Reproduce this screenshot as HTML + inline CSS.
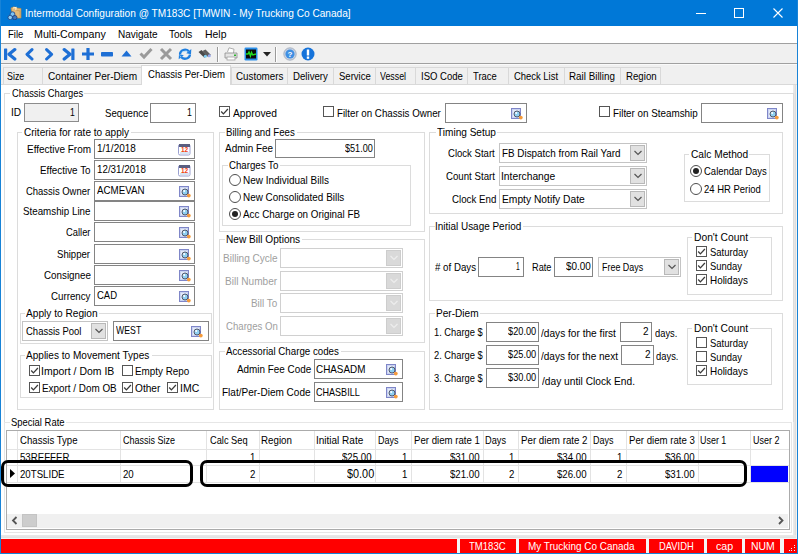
<!DOCTYPE html><html><head><meta charset="utf-8"><style>*{margin:0;padding:0}body{width:798px;height:554px;overflow:hidden;position:relative;background:#F0F0F0}.a{position:absolute}.t{position:absolute;white-space:pre;font-family:"Liberation Sans",sans-serif;font-size:11.5px;line-height:14px;transform-origin:0 50%}</style></head><body><div class="a" style="left:0px;top:0px;width:798px;height:554px;background:#F0F0F0;"></div>
<div class="a" style="left:0px;top:0px;width:798px;height:26px;background:#0078D7;"></div>
<div class="a" style="left:0px;top:0px;width:1px;height:554px;background:#1883D7;"></div>
<div class="a" style="left:797px;top:0px;width:1px;height:554px;background:#1883D7;"></div>
<div class="a" style="left:0px;top:553px;width:798px;height:1px;background:#1883D7;"></div>
<svg class="a" style="left:7px;top:6px;" width="15" height="14" viewBox="0 0 15 14"><path d="M4 2 L7 0.8 L10 2 L14 2.5 L14 12 L6 12 Z" fill="#E2B978" stroke="#B88A48" stroke-width="0.7"/><path d="M6 2 L9 1.5 L9 4" fill="none" stroke="#FFF0D0" stroke-width="1.2"/><path d="M9 4 L13 5 L13 11" fill="none" stroke="#C99A58" stroke-width="0.8"/><circle cx="5.5" cy="8.2" r="2.4" fill="#7CC2F2" stroke="#1D3F80" stroke-width="0.8"/><circle cx="3.2" cy="11.5" r="2.2" fill="#8ACDF5" stroke="#1D3F80" stroke-width="0.8"/><circle cx="7.8" cy="11.6" r="2.2" fill="#3E78C0" stroke="#1D3F80" stroke-width="0.8"/></svg>
<div class="a" style="left:696px;top:13px;width:10px;height:1px;background:#fff;"></div>
<div class="a" style="left:734px;top:8px;width:10px;height:10px;box-sizing:border-box;border:1px solid #fff;"></div>
<svg class="a" style="left:773px;top:8px;" width="10" height="10" viewBox="0 0 10 10"><path d="M0.5 0.5 L9.5 9.5 M9.5 0.5 L0.5 9.5" stroke="#fff" stroke-width="1.1"/></svg>
<div class="a" style="left:1px;top:26px;width:796px;height:17px;background:#fff;"></div>
<div class="a" style="left:1px;top:43px;width:796px;height:1px;background:#A0A0A0;"></div>
<div class="a" style="left:1px;top:44px;width:796px;height:19px;background:#F0F0F0;"></div>
<div class="a" style="left:1px;top:63px;width:796px;height:1px;background:#A0A0A0;"></div>
<div class="a" style="left:1px;top:64px;width:796px;height:1px;background:#FAFAFA;"></div>
<svg class="a" style="left:3px;top:47px;" width="14" height="14" viewBox="0 0 14 14"><rect x="1" y="1.5" width="3.2" height="11.5" rx="0.6" fill="#1E6FD5"/><path d="M11.8 2.6 L6 7.3 L11.8 12" fill="none" stroke="#1E6FD5" stroke-width="3.2" stroke-linecap="round" stroke-linejoin="round"/></svg>
<svg class="a" style="left:24px;top:47px;" width="11" height="14" viewBox="0 0 11 14"><path d="M8 2.6 L3 7.3 L8 12" fill="none" stroke="#1E6FD5" stroke-width="3" stroke-linecap="round" stroke-linejoin="round"/></svg>
<svg class="a" style="left:44px;top:47px;" width="11" height="14" viewBox="0 0 11 14"><path d="M2.6 2.6 L7.6 7.3 L2.6 12" fill="none" stroke="#1E6FD5" stroke-width="3" stroke-linecap="round" stroke-linejoin="round"/></svg>
<svg class="a" style="left:62px;top:47px;" width="14" height="14" viewBox="0 0 14 14"><rect x="9.3" y="1.5" width="3.2" height="11.5" rx="0.6" fill="#1E6FD5"/><path d="M2.2 2.6 L8 7.3 L2.2 12" fill="none" stroke="#1E6FD5" stroke-width="3.2" stroke-linecap="round" stroke-linejoin="round"/></svg>
<svg class="a" style="left:81px;top:47px;" width="14" height="14" viewBox="0 0 14 14"><path d="M7 1 V13 M1 7 H13" stroke="#1E6FD5" stroke-width="3.2"/></svg>
<svg class="a" style="left:100px;top:47px;" width="14" height="14" viewBox="0 0 14 14"><rect x="1" y="5" width="12" height="4.5" rx="0.8" fill="#1E6FD5"/></svg>
<svg class="a" style="left:121px;top:50px;" width="11" height="7" viewBox="0 0 11 7"><path d="M0.5 6.5 L5.5 0.5 L10.5 6.5 Z" fill="#1E6FD5"/></svg>
<svg class="a" style="left:139px;top:47px;" width="14" height="13" viewBox="0 0 14 13"><path d="M1.5 6.5 L5 10 L12.5 2" fill="none" stroke="#9A9A9A" stroke-width="3"/></svg>
<svg class="a" style="left:159px;top:47px;" width="14" height="14" viewBox="0 0 14 14"><path d="M2 2 L12 12 M12 2 L2 12" stroke="#9A9A9A" stroke-width="3"/></svg>
<svg class="a" style="left:178px;top:47px;" width="14" height="14" viewBox="0 0 14 14"><path d="M2 7 C2.3 3, 7.5 1.2, 10.8 4.2" fill="none" stroke="#1F7FE0" stroke-width="2.3"/><path d="M13.3 2 L13 7.3 L8.2 6.2 Z" fill="#1F7FE0"/><path d="M12 7.5 C11.7 11.5, 6.5 13.2, 3.2 10.2" fill="none" stroke="#1F7FE0" stroke-width="2.3"/><path d="M0.7 12.3 L1 7 L5.8 8.2 Z" fill="#1F7FE0"/><path d="M4 5 L9 4" stroke="#A8DBFA" stroke-width="0.8"/><path d="M3 10 L1.8 8.5" stroke="#A8DBFA" stroke-width="0.8"/></svg>
<svg class="a" style="left:198px;top:49px;" width="13" height="10" viewBox="0 0 13 10"><path d="M0.5 3 L3.5 1 L8.8 6.2 L6.3 8.8 Z" fill="#4A4A4A"/><path d="M4.5 2 L7.5 0.5 L12.8 5.8 L10.2 8.2 Z" fill="#5E5E5E"/><circle cx="7.3" cy="7.3" r="1.5" fill="#7FD0F5"/><circle cx="11.3" cy="6.8" r="1.5" fill="#9AA8F0"/></svg>
<div class="a" style="left:217px;top:47px;width:1px;height:15px;background:#9A9A9A;"></div>
<div class="a" style="left:218px;top:47px;width:1px;height:15px;background:#FFFFFF;"></div>
<svg class="a" style="left:224px;top:47px;" width="14" height="14" viewBox="0 0 14 14"><path d="M3.5 5 L5 0.8 L10 2.2 L9.5 6" fill="#fff" stroke="#9A9A9A" stroke-width="0.8"/><path d="M1 6 L13 6 L13 11 L1 11 Z" fill="#E4E4E4" stroke="#8A8A8A" stroke-width="0.8"/><rect x="3" y="10" width="8" height="3" fill="#fff" stroke="#A0A0A0" stroke-width="0.8"/><rect x="10" y="7.5" width="2" height="1.5" fill="#2DB52D"/></svg>
<svg class="a" style="left:244px;top:47px;" width="14" height="14" viewBox="0 0 14 14"><rect x="0.5" y="0.5" width="13" height="13" rx="1.2" fill="#2B8FEA"/><rect x="2" y="2.5" width="10" height="9" fill="#0A0A0A"/><path d="M2 7 L4 7 L5 5 L6.5 9 L7.5 5.5 L8.8 8 L12 7" fill="none" stroke="#22DD22" stroke-width="1.4"/></svg>
<svg class="a" style="left:263px;top:52px;" width="8" height="5" viewBox="0 0 8 5"><path d="M0 0 L8 0 L4 4.5 Z" fill="#222"/></svg>
<div class="a" style="left:275px;top:47px;width:1px;height:15px;background:#9A9A9A;"></div>
<div class="a" style="left:276px;top:47px;width:1px;height:15px;background:#FFFFFF;"></div>
<svg class="a" style="left:283px;top:47px;" width="14" height="14" viewBox="0 0 14 14"><circle cx="7" cy="7" r="6.2" fill="#C9D3E3" stroke="#9AA6B8" stroke-width="0.8"/><circle cx="7" cy="7" r="4.6" fill="#3F8FE3"/><text x="7" y="10" font-family="Liberation Sans" font-size="8" font-weight="bold" fill="#fff" text-anchor="middle">?</text></svg>
<svg class="a" style="left:301px;top:47px;" width="14" height="14" viewBox="0 0 14 14"><circle cx="7" cy="7" r="6.5" fill="#1673DA"/><rect x="5.8" y="2.5" width="2.4" height="6" fill="#fff"/><rect x="5.8" y="9.5" width="2.4" height="2.3" fill="#fff"/></svg>
<div class="a" style="left:1px;top:84px;width:796px;height:455px;background:#fff;"></div>
<div class="a" style="left:793px;top:84px;width:1px;height:454px;background:#EAEAEA;"></div>
<div class="a" style="left:794px;top:84px;width:1px;height:454px;background:#E6E6E6;"></div>
<div class="a" style="left:795px;top:84px;width:1px;height:454px;background:#DDDDDD;"></div>
<div class="a" style="left:796px;top:84px;width:1px;height:455px;background:#F7F3EE;"></div>
<div class="a" style="left:1px;top:535px;width:795px;height:1px;background:#E8E8E8;"></div>
<div class="a" style="left:1px;top:536px;width:795px;height:1px;background:#E6E6E6;"></div>
<div class="a" style="left:1px;top:537px;width:795px;height:1px;background:#E2E2E2;"></div>
<div class="a" style="left:3px;top:67px;width:40px;height:18px;background:#F0F0F0;box-sizing:border-box;border:1px solid #D9D9D9;"></div>
<div class="a" style="left:42px;top:67px;width:100px;height:18px;background:#F0F0F0;box-sizing:border-box;border:1px solid #D9D9D9;"></div>
<div class="a" style="left:231px;top:67px;width:57px;height:18px;background:#F0F0F0;box-sizing:border-box;border:1px solid #D9D9D9;"></div>
<div class="a" style="left:287px;top:67px;width:47px;height:18px;background:#F0F0F0;box-sizing:border-box;border:1px solid #D9D9D9;"></div>
<div class="a" style="left:333px;top:67px;width:43px;height:18px;background:#F0F0F0;box-sizing:border-box;border:1px solid #D9D9D9;"></div>
<div class="a" style="left:375px;top:67px;width:41px;height:18px;background:#F0F0F0;box-sizing:border-box;border:1px solid #D9D9D9;"></div>
<div class="a" style="left:415px;top:67px;width:53px;height:18px;background:#F0F0F0;box-sizing:border-box;border:1px solid #D9D9D9;"></div>
<div class="a" style="left:467px;top:67px;width:42px;height:18px;background:#F0F0F0;box-sizing:border-box;border:1px solid #D9D9D9;"></div>
<div class="a" style="left:508px;top:67px;width:57px;height:18px;background:#F0F0F0;box-sizing:border-box;border:1px solid #D9D9D9;"></div>
<div class="a" style="left:564px;top:67px;width:57px;height:18px;background:#F0F0F0;box-sizing:border-box;border:1px solid #D9D9D9;"></div>
<div class="a" style="left:620px;top:67px;width:41px;height:18px;background:#F0F0F0;box-sizing:border-box;border:1px solid #D9D9D9;"></div>
<div class="a" style="left:1px;top:84px;width:796px;height:1px;background:#D9D9D9;"></div>
<div class="a" style="left:141px;top:65px;width:90px;height:20px;background:#fff;box-sizing:border-box;border:1px solid #D9D9D9;border-bottom:none;"></div>
<div class="a" style="left:4px;top:93px;width:6px;height:1px;background:#DCDCDC;"></div>
<div class="a" style="left:84px;top:93px;width:710px;height:1px;background:#DCDCDC;"></div>
<div class="a" style="left:4px;top:93px;width:1px;height:329px;background:#DCDCDC;"></div>
<div class="a" style="left:793px;top:93px;width:1px;height:329px;background:#DCDCDC;"></div>
<div class="a" style="left:24px;top:103px;width:55px;height:19px;background:#F0F0F0;box-sizing:border-box;border:1px solid #8C8C8C;"></div>
<div class="a" style="left:150px;top:103px;width:46px;height:20px;background:#fff;box-sizing:border-box;border:1px solid #848484;"></div>
<svg class="a" style="left:219px;top:106px;" width="12" height="12" viewBox="0 0 12 12"><rect x="0.5" y="0.5" width="10" height="10" fill="#fff" stroke="#555"/><path d="M2.2 5.5 L4.4 7.9 L8.9 3" fill="none" stroke="#3A3A3A" stroke-width="1.3"/></svg>
<svg class="a" style="left:323px;top:106px;" width="12" height="12" viewBox="0 0 12 12"><rect x="0.5" y="0.5" width="10" height="10" fill="#fff" stroke="#555"/></svg>
<div class="a" style="left:445px;top:103px;width:82px;height:20px;background:#fff;box-sizing:border-box;border:1px solid #848484;"></div>
<svg class="a" style="left:511px;top:108px;" width="13" height="12" viewBox="0 0 13 12"><rect x="0.5" y="0.5" width="9" height="10" fill="#C9D3F2" stroke="#7F86C8"/><rect x="2" y="2" width="6" height="7" fill="#E4EAFA"/><circle cx="6" cy="6" r="3" fill="#8FD0F2" stroke="#4A4A5A" stroke-width="0.9"/><circle cx="5.2" cy="5" r="1" fill="#fff"/><circle cx="9.8" cy="9.6" r="1.9" fill="#F59A3A"/></svg>
<svg class="a" style="left:599px;top:106px;" width="12" height="12" viewBox="0 0 12 12"><rect x="0.5" y="0.5" width="10" height="10" fill="#fff" stroke="#555"/></svg>
<div class="a" style="left:701px;top:103px;width:82px;height:20px;background:#fff;box-sizing:border-box;border:1px solid #848484;"></div>
<svg class="a" style="left:767px;top:108px;" width="13" height="12" viewBox="0 0 13 12"><rect x="0.5" y="0.5" width="9" height="10" fill="#C9D3F2" stroke="#7F86C8"/><rect x="2" y="2" width="6" height="7" fill="#E4EAFA"/><circle cx="6" cy="6" r="3" fill="#8FD0F2" stroke="#4A4A5A" stroke-width="0.9"/><circle cx="5.2" cy="5" r="1" fill="#fff"/><circle cx="9.8" cy="9.6" r="1.9" fill="#F59A3A"/></svg>
<div class="a" style="left:17px;top:132px;width:5px;height:1px;background:#DCDCDC;"></div>
<div class="a" style="left:131px;top:132px;width:83px;height:1px;background:#DCDCDC;"></div>
<div class="a" style="left:17px;top:132px;width:1px;height:278px;background:#DCDCDC;"></div>
<div class="a" style="left:213px;top:132px;width:1px;height:278px;background:#DCDCDC;"></div>
<div class="a" style="left:17px;top:409px;width:197px;height:1px;background:#DCDCDC;"></div>
<div class="a" style="left:94px;top:139px;width:101px;height:20px;background:#fff;box-sizing:border-box;border:1px solid #848484;"></div>
<svg class="a" style="left:178px;top:143px;" width="13" height="13" viewBox="0 0 13 13"><rect x="0.5" y="1.5" width="11.5" height="10.5" rx="1.5" fill="#fff" stroke="#9AA0D0"/><rect x="1" y="1" width="11" height="3" fill="#5A5E80"/><rect x="2" y="9" width="9" height="2" fill="#D6E4F4"/><text x="6.5" y="9" font-family="Liberation Sans" font-size="6.5" font-weight="bold" fill="#F0400F" text-anchor="middle">12</text></svg>
<div class="a" style="left:94px;top:160px;width:101px;height:20px;background:#fff;box-sizing:border-box;border:1px solid #848484;"></div>
<svg class="a" style="left:178px;top:164px;" width="13" height="13" viewBox="0 0 13 13"><rect x="0.5" y="1.5" width="11.5" height="10.5" rx="1.5" fill="#fff" stroke="#9AA0D0"/><rect x="1" y="1" width="11" height="3" fill="#5A5E80"/><rect x="2" y="9" width="9" height="2" fill="#D6E4F4"/><text x="6.5" y="9" font-family="Liberation Sans" font-size="6.5" font-weight="bold" fill="#F0400F" text-anchor="middle">12</text></svg>
<div class="a" style="left:94px;top:181px;width:101px;height:20px;background:#fff;box-sizing:border-box;border:1px solid #848484;"></div>
<svg class="a" style="left:179px;top:186px;" width="13" height="12" viewBox="0 0 13 12"><rect x="0.5" y="0.5" width="9" height="10" fill="#C9D3F2" stroke="#7F86C8"/><rect x="2" y="2" width="6" height="7" fill="#E4EAFA"/><circle cx="6" cy="6" r="3" fill="#8FD0F2" stroke="#4A4A5A" stroke-width="0.9"/><circle cx="5.2" cy="5" r="1" fill="#fff"/><circle cx="9.8" cy="9.6" r="1.9" fill="#F59A3A"/></svg>
<div class="a" style="left:94px;top:201px;width:101px;height:20px;background:#fff;box-sizing:border-box;border:1px solid #848484;"></div>
<svg class="a" style="left:179px;top:206px;" width="13" height="12" viewBox="0 0 13 12"><rect x="0.5" y="0.5" width="9" height="10" fill="#C9D3F2" stroke="#7F86C8"/><rect x="2" y="2" width="6" height="7" fill="#E4EAFA"/><circle cx="6" cy="6" r="3" fill="#8FD0F2" stroke="#4A4A5A" stroke-width="0.9"/><circle cx="5.2" cy="5" r="1" fill="#fff"/><circle cx="9.8" cy="9.6" r="1.9" fill="#F59A3A"/></svg>
<div class="a" style="left:94px;top:222px;width:101px;height:20px;background:#fff;box-sizing:border-box;border:1px solid #848484;"></div>
<svg class="a" style="left:179px;top:227px;" width="13" height="12" viewBox="0 0 13 12"><rect x="0.5" y="0.5" width="9" height="10" fill="#C9D3F2" stroke="#7F86C8"/><rect x="2" y="2" width="6" height="7" fill="#E4EAFA"/><circle cx="6" cy="6" r="3" fill="#8FD0F2" stroke="#4A4A5A" stroke-width="0.9"/><circle cx="5.2" cy="5" r="1" fill="#fff"/><circle cx="9.8" cy="9.6" r="1.9" fill="#F59A3A"/></svg>
<div class="a" style="left:94px;top:244px;width:101px;height:20px;background:#fff;box-sizing:border-box;border:1px solid #848484;"></div>
<svg class="a" style="left:179px;top:249px;" width="13" height="12" viewBox="0 0 13 12"><rect x="0.5" y="0.5" width="9" height="10" fill="#C9D3F2" stroke="#7F86C8"/><rect x="2" y="2" width="6" height="7" fill="#E4EAFA"/><circle cx="6" cy="6" r="3" fill="#8FD0F2" stroke="#4A4A5A" stroke-width="0.9"/><circle cx="5.2" cy="5" r="1" fill="#fff"/><circle cx="9.8" cy="9.6" r="1.9" fill="#F59A3A"/></svg>
<div class="a" style="left:94px;top:265px;width:101px;height:20px;background:#fff;box-sizing:border-box;border:1px solid #848484;"></div>
<svg class="a" style="left:179px;top:270px;" width="13" height="12" viewBox="0 0 13 12"><rect x="0.5" y="0.5" width="9" height="10" fill="#C9D3F2" stroke="#7F86C8"/><rect x="2" y="2" width="6" height="7" fill="#E4EAFA"/><circle cx="6" cy="6" r="3" fill="#8FD0F2" stroke="#4A4A5A" stroke-width="0.9"/><circle cx="5.2" cy="5" r="1" fill="#fff"/><circle cx="9.8" cy="9.6" r="1.9" fill="#F59A3A"/></svg>
<div class="a" style="left:94px;top:286px;width:101px;height:20px;background:#fff;box-sizing:border-box;border:1px solid #848484;"></div>
<svg class="a" style="left:179px;top:291px;" width="13" height="12" viewBox="0 0 13 12"><rect x="0.5" y="0.5" width="9" height="10" fill="#C9D3F2" stroke="#7F86C8"/><rect x="2" y="2" width="6" height="7" fill="#E4EAFA"/><circle cx="6" cy="6" r="3" fill="#8FD0F2" stroke="#4A4A5A" stroke-width="0.9"/><circle cx="5.2" cy="5" r="1" fill="#fff"/><circle cx="9.8" cy="9.6" r="1.9" fill="#F59A3A"/></svg>
<div class="a" style="left:20px;top:313px;width:5px;height:1px;background:#DCDCDC;"></div>
<div class="a" style="left:99px;top:313px;width:113px;height:1px;background:#DCDCDC;"></div>
<div class="a" style="left:20px;top:313px;width:1px;height:31px;background:#DCDCDC;"></div>
<div class="a" style="left:211px;top:313px;width:1px;height:31px;background:#DCDCDC;"></div>
<div class="a" style="left:20px;top:343px;width:192px;height:1px;background:#DCDCDC;"></div>
<div class="a" style="left:22px;top:321px;width:86px;height:20px;background:#fff;box-sizing:border-box;border:1px solid #C4C4C4;"></div>
<div class="a" style="left:91px;top:323px;width:15px;height:16px;background:#E1E1E1;box-sizing:border-box;border:1px solid #B8B8B8;"></div>
<svg class="a" style="left:94px;top:328px;" width="10" height="6" viewBox="0 0 10 6"><path d="M1.5 1 L5 4.5 L8.5 1" fill="none" stroke="#555" stroke-width="1.2"/></svg>
<div class="a" style="left:113px;top:321px;width:96px;height:20px;background:#fff;box-sizing:border-box;border:1px solid #848484;"></div>
<svg class="a" style="left:191px;top:326px;" width="13" height="12" viewBox="0 0 13 12"><rect x="0.5" y="0.5" width="9" height="10" fill="#C9D3F2" stroke="#7F86C8"/><rect x="2" y="2" width="6" height="7" fill="#E4EAFA"/><circle cx="6" cy="6" r="3" fill="#8FD0F2" stroke="#4A4A5A" stroke-width="0.9"/><circle cx="5.2" cy="5" r="1" fill="#fff"/><circle cx="9.8" cy="9.6" r="1.9" fill="#F59A3A"/></svg>
<div class="a" style="left:20px;top:355px;width:5px;height:1px;background:#DCDCDC;"></div>
<div class="a" style="left:152px;top:355px;width:60px;height:1px;background:#DCDCDC;"></div>
<div class="a" style="left:20px;top:355px;width:1px;height:43px;background:#DCDCDC;"></div>
<div class="a" style="left:211px;top:355px;width:1px;height:43px;background:#DCDCDC;"></div>
<div class="a" style="left:20px;top:397px;width:192px;height:1px;background:#DCDCDC;"></div>
<svg class="a" style="left:29px;top:365px;" width="12" height="12" viewBox="0 0 12 12"><rect x="0.5" y="0.5" width="10" height="10" fill="#fff" stroke="#555"/><path d="M2.2 5.5 L4.4 7.9 L8.9 3" fill="none" stroke="#3A3A3A" stroke-width="1.3"/></svg>
<svg class="a" style="left:122px;top:365px;" width="12" height="12" viewBox="0 0 12 12"><rect x="0.5" y="0.5" width="10" height="10" fill="#fff" stroke="#555"/></svg>
<svg class="a" style="left:29px;top:382px;" width="12" height="12" viewBox="0 0 12 12"><rect x="0.5" y="0.5" width="10" height="10" fill="#fff" stroke="#555"/><path d="M2.2 5.5 L4.4 7.9 L8.9 3" fill="none" stroke="#3A3A3A" stroke-width="1.3"/></svg>
<svg class="a" style="left:122px;top:382px;" width="12" height="12" viewBox="0 0 12 12"><rect x="0.5" y="0.5" width="10" height="10" fill="#fff" stroke="#555"/><path d="M2.2 5.5 L4.4 7.9 L8.9 3" fill="none" stroke="#3A3A3A" stroke-width="1.3"/></svg>
<svg class="a" style="left:167px;top:382px;" width="12" height="12" viewBox="0 0 12 12"><rect x="0.5" y="0.5" width="10" height="10" fill="#fff" stroke="#555"/><path d="M2.2 5.5 L4.4 7.9 L8.9 3" fill="none" stroke="#3A3A3A" stroke-width="1.3"/></svg>
<div class="a" style="left:219px;top:132px;width:6px;height:1px;background:#DCDCDC;"></div>
<div class="a" style="left:297px;top:132px;width:128px;height:1px;background:#DCDCDC;"></div>
<div class="a" style="left:219px;top:132px;width:1px;height:100px;background:#DCDCDC;"></div>
<div class="a" style="left:424px;top:132px;width:1px;height:100px;background:#DCDCDC;"></div>
<div class="a" style="left:219px;top:231px;width:206px;height:1px;background:#DCDCDC;"></div>
<div class="a" style="left:275px;top:139px;width:100px;height:19px;background:#fff;box-sizing:border-box;border:1px solid #848484;"></div>
<div class="a" style="left:222px;top:165px;width:6px;height:1px;background:#DCDCDC;"></div>
<div class="a" style="left:280px;top:165px;width:131px;height:1px;background:#DCDCDC;"></div>
<div class="a" style="left:222px;top:165px;width:1px;height:61px;background:#DCDCDC;"></div>
<div class="a" style="left:410px;top:165px;width:1px;height:61px;background:#DCDCDC;"></div>
<div class="a" style="left:222px;top:225px;width:189px;height:1px;background:#DCDCDC;"></div>
<svg class="a" style="left:229px;top:174px;" width="12" height="12" viewBox="0 0 12 12"><circle cx="6" cy="6" r="5.5" fill="#fff" stroke="#4D4D4D"/></svg>
<svg class="a" style="left:229px;top:191px;" width="12" height="12" viewBox="0 0 12 12"><circle cx="6" cy="6" r="5.5" fill="#fff" stroke="#4D4D4D"/></svg>
<svg class="a" style="left:229px;top:208px;" width="12" height="12" viewBox="0 0 12 12"><circle cx="6" cy="6" r="5.5" fill="#fff" stroke="#4D4D4D"/><circle cx="6" cy="6" r="3" fill="#222"/></svg>
<div class="a" style="left:219px;top:239px;width:6px;height:1px;background:#DCDCDC;"></div>
<div class="a" style="left:302px;top:239px;width:123px;height:1px;background:#DCDCDC;"></div>
<div class="a" style="left:219px;top:239px;width:1px;height:104px;background:#DCDCDC;"></div>
<div class="a" style="left:424px;top:239px;width:1px;height:104px;background:#DCDCDC;"></div>
<div class="a" style="left:219px;top:342px;width:206px;height:1px;background:#DCDCDC;"></div>
<div class="a" style="left:280px;top:248px;width:123px;height:20px;background:#fff;box-sizing:border-box;border:1px solid #D0D0D0;"></div>
<div class="a" style="left:386px;top:250px;width:15px;height:16px;background:#D9D9D9;box-sizing:border-box;border:1px solid #CDCDCD;"></div>
<svg class="a" style="left:389px;top:255px;" width="10" height="6" viewBox="0 0 10 6"><path d="M1.5 1 L5 4.5 L8.5 1" fill="none" stroke="#EDEDED" stroke-width="1.2"/></svg>
<div class="a" style="left:280px;top:271px;width:123px;height:20px;background:#fff;box-sizing:border-box;border:1px solid #D0D0D0;"></div>
<div class="a" style="left:386px;top:273px;width:15px;height:16px;background:#D9D9D9;box-sizing:border-box;border:1px solid #CDCDCD;"></div>
<svg class="a" style="left:389px;top:278px;" width="10" height="6" viewBox="0 0 10 6"><path d="M1.5 1 L5 4.5 L8.5 1" fill="none" stroke="#EDEDED" stroke-width="1.2"/></svg>
<div class="a" style="left:280px;top:293px;width:123px;height:20px;background:#fff;box-sizing:border-box;border:1px solid #D0D0D0;"></div>
<div class="a" style="left:386px;top:295px;width:15px;height:16px;background:#D9D9D9;box-sizing:border-box;border:1px solid #CDCDCD;"></div>
<svg class="a" style="left:389px;top:300px;" width="10" height="6" viewBox="0 0 10 6"><path d="M1.5 1 L5 4.5 L8.5 1" fill="none" stroke="#EDEDED" stroke-width="1.2"/></svg>
<div class="a" style="left:280px;top:316px;width:123px;height:20px;background:#fff;box-sizing:border-box;border:1px solid #D0D0D0;"></div>
<div class="a" style="left:386px;top:318px;width:15px;height:16px;background:#D9D9D9;box-sizing:border-box;border:1px solid #CDCDCD;"></div>
<svg class="a" style="left:389px;top:323px;" width="10" height="6" viewBox="0 0 10 6"><path d="M1.5 1 L5 4.5 L8.5 1" fill="none" stroke="#EDEDED" stroke-width="1.2"/></svg>
<div class="a" style="left:219px;top:351px;width:6px;height:1px;background:#DCDCDC;"></div>
<div class="a" style="left:341px;top:351px;width:84px;height:1px;background:#DCDCDC;"></div>
<div class="a" style="left:219px;top:351px;width:1px;height:59px;background:#DCDCDC;"></div>
<div class="a" style="left:424px;top:351px;width:1px;height:59px;background:#DCDCDC;"></div>
<div class="a" style="left:219px;top:409px;width:206px;height:1px;background:#DCDCDC;"></div>
<div class="a" style="left:314px;top:359px;width:89px;height:20px;background:#fff;box-sizing:border-box;border:1px solid #848484;"></div>
<svg class="a" style="left:386px;top:364px;" width="13" height="12" viewBox="0 0 13 12"><rect x="0.5" y="0.5" width="9" height="10" fill="#C9D3F2" stroke="#7F86C8"/><rect x="2" y="2" width="6" height="7" fill="#E4EAFA"/><circle cx="6" cy="6" r="3" fill="#8FD0F2" stroke="#4A4A5A" stroke-width="0.9"/><circle cx="5.2" cy="5" r="1" fill="#fff"/><circle cx="9.8" cy="9.6" r="1.9" fill="#F59A3A"/></svg>
<div class="a" style="left:314px;top:382px;width:89px;height:20px;background:#fff;box-sizing:border-box;border:1px solid #848484;"></div>
<svg class="a" style="left:386px;top:387px;" width="13" height="12" viewBox="0 0 13 12"><rect x="0.5" y="0.5" width="9" height="10" fill="#C9D3F2" stroke="#7F86C8"/><rect x="2" y="2" width="6" height="7" fill="#E4EAFA"/><circle cx="6" cy="6" r="3" fill="#8FD0F2" stroke="#4A4A5A" stroke-width="0.9"/><circle cx="5.2" cy="5" r="1" fill="#fff"/><circle cx="9.8" cy="9.6" r="1.9" fill="#F59A3A"/></svg>
<div class="a" style="left:429px;top:132px;width:7px;height:1px;background:#DCDCDC;"></div>
<div class="a" style="left:497px;top:132px;width:286px;height:1px;background:#DCDCDC;"></div>
<div class="a" style="left:429px;top:132px;width:1px;height:82px;background:#DCDCDC;"></div>
<div class="a" style="left:782px;top:132px;width:1px;height:82px;background:#DCDCDC;"></div>
<div class="a" style="left:429px;top:213px;width:354px;height:1px;background:#DCDCDC;"></div>
<div class="a" style="left:499px;top:143px;width:148px;height:20px;background:#fff;box-sizing:border-box;border:1px solid #C4C4C4;"></div>
<div class="a" style="left:630px;top:145px;width:15px;height:16px;background:#E1E1E1;box-sizing:border-box;border:1px solid #B8B8B8;"></div>
<svg class="a" style="left:633px;top:150px;" width="10" height="6" viewBox="0 0 10 6"><path d="M1.5 1 L5 4.5 L8.5 1" fill="none" stroke="#555" stroke-width="1.2"/></svg>
<div class="a" style="left:499px;top:166px;width:148px;height:20px;background:#fff;box-sizing:border-box;border:1px solid #C4C4C4;"></div>
<div class="a" style="left:630px;top:168px;width:15px;height:16px;background:#E1E1E1;box-sizing:border-box;border:1px solid #B8B8B8;"></div>
<svg class="a" style="left:633px;top:173px;" width="10" height="6" viewBox="0 0 10 6"><path d="M1.5 1 L5 4.5 L8.5 1" fill="none" stroke="#555" stroke-width="1.2"/></svg>
<div class="a" style="left:499px;top:189px;width:148px;height:20px;background:#fff;box-sizing:border-box;border:1px solid #C4C4C4;"></div>
<div class="a" style="left:630px;top:191px;width:15px;height:16px;background:#E1E1E1;box-sizing:border-box;border:1px solid #B8B8B8;"></div>
<svg class="a" style="left:633px;top:196px;" width="10" height="6" viewBox="0 0 10 6"><path d="M1.5 1 L5 4.5 L8.5 1" fill="none" stroke="#555" stroke-width="1.2"/></svg>
<div class="a" style="left:684px;top:154px;width:5px;height:1px;background:#DCDCDC;"></div>
<div class="a" style="left:749px;top:154px;width:21px;height:1px;background:#DCDCDC;"></div>
<div class="a" style="left:684px;top:154px;width:1px;height:48px;background:#DCDCDC;"></div>
<div class="a" style="left:769px;top:154px;width:1px;height:48px;background:#DCDCDC;"></div>
<div class="a" style="left:684px;top:201px;width:86px;height:1px;background:#DCDCDC;"></div>
<svg class="a" style="left:690px;top:165px;" width="12" height="12" viewBox="0 0 12 12"><circle cx="6" cy="6" r="5.5" fill="#fff" stroke="#4D4D4D"/><circle cx="6" cy="6" r="3" fill="#222"/></svg>
<svg class="a" style="left:690px;top:183px;" width="12" height="12" viewBox="0 0 12 12"><circle cx="6" cy="6" r="5.5" fill="#fff" stroke="#4D4D4D"/></svg>
<div class="a" style="left:429px;top:226px;width:6px;height:1px;background:#DCDCDC;"></div>
<div class="a" style="left:523px;top:226px;width:260px;height:1px;background:#DCDCDC;"></div>
<div class="a" style="left:429px;top:226px;width:1px;height:75px;background:#DCDCDC;"></div>
<div class="a" style="left:782px;top:226px;width:1px;height:75px;background:#DCDCDC;"></div>
<div class="a" style="left:429px;top:300px;width:354px;height:1px;background:#DCDCDC;"></div>
<div class="a" style="left:478px;top:257px;width:46px;height:20px;background:#fff;box-sizing:border-box;border:1px solid #848484;"></div>
<div class="a" style="left:554px;top:257px;width:39px;height:20px;background:#fff;box-sizing:border-box;border:1px solid #848484;"></div>
<div class="a" style="left:598px;top:257px;width:83px;height:20px;background:#fff;box-sizing:border-box;border:1px solid #C4C4C4;"></div>
<div class="a" style="left:664px;top:259px;width:15px;height:16px;background:#E1E1E1;box-sizing:border-box;border:1px solid #B8B8B8;"></div>
<svg class="a" style="left:667px;top:264px;" width="10" height="6" viewBox="0 0 10 6"><path d="M1.5 1 L5 4.5 L8.5 1" fill="none" stroke="#555" stroke-width="1.2"/></svg>
<div class="a" style="left:687px;top:237px;width:5px;height:1px;background:#DCDCDC;"></div>
<div class="a" style="left:750px;top:237px;width:22px;height:1px;background:#DCDCDC;"></div>
<div class="a" style="left:687px;top:237px;width:1px;height:58px;background:#DCDCDC;"></div>
<div class="a" style="left:771px;top:237px;width:1px;height:58px;background:#DCDCDC;"></div>
<div class="a" style="left:687px;top:294px;width:85px;height:1px;background:#DCDCDC;"></div>
<svg class="a" style="left:696px;top:246px;" width="12" height="12" viewBox="0 0 12 12"><rect x="0.5" y="0.5" width="10" height="10" fill="#fff" stroke="#555"/><path d="M2.2 5.5 L4.4 7.9 L8.9 3" fill="none" stroke="#3A3A3A" stroke-width="1.3"/></svg>
<svg class="a" style="left:696px;top:260px;" width="12" height="12" viewBox="0 0 12 12"><rect x="0.5" y="0.5" width="10" height="10" fill="#fff" stroke="#555"/><path d="M2.2 5.5 L4.4 7.9 L8.9 3" fill="none" stroke="#3A3A3A" stroke-width="1.3"/></svg>
<svg class="a" style="left:696px;top:274px;" width="12" height="12" viewBox="0 0 12 12"><rect x="0.5" y="0.5" width="10" height="10" fill="#fff" stroke="#555"/><path d="M2.2 5.5 L4.4 7.9 L8.9 3" fill="none" stroke="#3A3A3A" stroke-width="1.3"/></svg>
<div class="a" style="left:429px;top:313px;width:6px;height:1px;background:#DCDCDC;"></div>
<div class="a" style="left:480px;top:313px;width:303px;height:1px;background:#DCDCDC;"></div>
<div class="a" style="left:429px;top:313px;width:1px;height:97px;background:#DCDCDC;"></div>
<div class="a" style="left:782px;top:313px;width:1px;height:97px;background:#DCDCDC;"></div>
<div class="a" style="left:429px;top:409px;width:354px;height:1px;background:#DCDCDC;"></div>
<div class="a" style="left:486px;top:322px;width:53px;height:20px;background:#fff;box-sizing:border-box;border:1px solid #848484;"></div>
<div class="a" style="left:486px;top:345px;width:53px;height:20px;background:#fff;box-sizing:border-box;border:1px solid #848484;"></div>
<div class="a" style="left:486px;top:368px;width:53px;height:20px;background:#fff;box-sizing:border-box;border:1px solid #848484;"></div>
<div class="a" style="left:620px;top:322px;width:32px;height:20px;background:#fff;box-sizing:border-box;border:1px solid #848484;"></div>
<div class="a" style="left:621px;top:345px;width:33px;height:20px;background:#fff;box-sizing:border-box;border:1px solid #848484;"></div>
<div class="a" style="left:687px;top:328px;width:5px;height:1px;background:#DCDCDC;"></div>
<div class="a" style="left:750px;top:328px;width:22px;height:1px;background:#DCDCDC;"></div>
<div class="a" style="left:687px;top:328px;width:1px;height:57px;background:#DCDCDC;"></div>
<div class="a" style="left:771px;top:328px;width:1px;height:57px;background:#DCDCDC;"></div>
<div class="a" style="left:687px;top:384px;width:85px;height:1px;background:#DCDCDC;"></div>
<svg class="a" style="left:696px;top:337px;" width="12" height="12" viewBox="0 0 12 12"><rect x="0.5" y="0.5" width="10" height="10" fill="#fff" stroke="#555"/></svg>
<svg class="a" style="left:696px;top:351px;" width="12" height="12" viewBox="0 0 12 12"><rect x="0.5" y="0.5" width="10" height="10" fill="#fff" stroke="#555"/></svg>
<svg class="a" style="left:696px;top:365px;" width="12" height="12" viewBox="0 0 12 12"><rect x="0.5" y="0.5" width="10" height="10" fill="#fff" stroke="#555"/><path d="M2.2 5.5 L4.4 7.9 L8.9 3" fill="none" stroke="#3A3A3A" stroke-width="1.3"/></svg>
<div class="a" style="left:4px;top:422px;width:6px;height:1px;background:#E6E6E6;"></div>
<div class="a" style="left:66px;top:422px;width:726px;height:1px;background:#E6E6E6;"></div>
<div class="a" style="left:4px;top:422px;width:1px;height:111px;background:#E6E6E6;"></div>
<div class="a" style="left:791px;top:422px;width:1px;height:111px;background:#E6E6E6;"></div>
<div class="a" style="left:4px;top:532px;width:788px;height:1px;background:#E6E6E6;"></div>
<div class="a" style="left:6px;top:430px;width:784px;height:100px;background:#fff;box-sizing:border-box;border:1px solid #ABABAB;"></div>
<div class="a" style="left:7px;top:449px;width:782px;height:1px;background:#E3E3E3;"></div>
<div class="a" style="left:17px;top:431px;width:1px;height:51px;background:#E3E3E3;"></div>
<div class="a" style="left:120px;top:431px;width:1px;height:51px;background:#E3E3E3;"></div>
<div class="a" style="left:206px;top:431px;width:1px;height:51px;background:#E3E3E3;"></div>
<div class="a" style="left:259px;top:431px;width:1px;height:51px;background:#E3E3E3;"></div>
<div class="a" style="left:314px;top:431px;width:1px;height:51px;background:#E3E3E3;"></div>
<div class="a" style="left:375px;top:431px;width:1px;height:51px;background:#E3E3E3;"></div>
<div class="a" style="left:411px;top:431px;width:1px;height:51px;background:#E3E3E3;"></div>
<div class="a" style="left:483px;top:431px;width:1px;height:51px;background:#E3E3E3;"></div>
<div class="a" style="left:518px;top:431px;width:1px;height:51px;background:#E3E3E3;"></div>
<div class="a" style="left:590px;top:431px;width:1px;height:51px;background:#E3E3E3;"></div>
<div class="a" style="left:626px;top:431px;width:1px;height:51px;background:#E3E3E3;"></div>
<div class="a" style="left:698px;top:431px;width:1px;height:51px;background:#E3E3E3;"></div>
<div class="a" style="left:750px;top:431px;width:1px;height:51px;background:#E3E3E3;"></div>
<div class="a" style="left:7px;top:465px;width:782px;height:1px;background:#E3E3E3;"></div>
<div class="a" style="left:7px;top:482px;width:782px;height:1px;background:#E3E3E3;"></div>
<svg class="a" style="left:10px;top:469px;" width="6" height="10" viewBox="0 0 6 10"><path d="M0 0 L5 4.5 L0 9 Z" fill="#000"/></svg>
<div class="a" style="left:751px;top:466px;width:37px;height:16px;background:#0000FF;"></div>
<div class="a" style="left:7px;top:514px;width:781px;height:14px;background:#F0F0F0;"></div>
<svg class="a" style="left:11px;top:516px;" width="8" height="9" viewBox="0 0 8 9"><path d="M5.5 1 L2 4.5 L5.5 8" fill="none" stroke="#555" stroke-width="1.8"/></svg>
<div class="a" style="left:22px;top:514px;width:15px;height:13px;background:#CDCDCD;box-sizing:border-box;border:1px solid #C4C4C4;"></div>
<svg class="a" style="left:777px;top:516px;" width="8" height="9" viewBox="0 0 8 9"><path d="M2 1 L5.5 4.5 L2 8" fill="none" stroke="#555" stroke-width="1.8"/></svg>
<div class="a" style="left:1px;top:460px;width:192px;height:27px;box-sizing:border-box;border:1px solid #000;border-width:3px;border-radius:7px;"></div>
<div class="a" style="left:200px;top:460px;width:547px;height:27px;box-sizing:border-box;border:1px solid #000;border-width:3px;border-radius:7px;"></div>
<div class="a" style="left:1px;top:538px;width:796px;height:15px;background:#F4F4F4;"></div>
<div class="a" style="left:1px;top:539px;width:456px;height:14px;background:#FF0000;"></div>
<div class="a" style="left:460px;top:539px;width:56px;height:14px;background:#FF0000;"></div>
<div class="a" style="left:519px;top:539px;width:127px;height:14px;background:#FF0000;"></div>
<div class="a" style="left:649px;top:539px;width:55px;height:14px;background:#FF0000;"></div>
<div class="a" style="left:707px;top:539px;width:35px;height:14px;background:#FF0000;"></div>
<div class="a" style="left:745px;top:539px;width:35px;height:14px;background:#FF0000;"></div>
<div class="a" style="left:784px;top:539px;width:13px;height:14px;background:#FF0000;"></div>
<div class="a" style="left:794px;top:550px;width:1px;height:1px;background:#E8F4F8;"></div>
<div class="a" style="left:791px;top:550px;width:1px;height:1px;background:#E8F4F8;"></div>
<div class="a" style="left:789px;top:550px;width:1px;height:1px;background:#E8F4F8;"></div>
<div class="a" style="left:794px;top:547px;width:1px;height:1px;background:#E8F4F8;"></div>
<div class="a" style="left:791px;top:548px;width:1px;height:1px;background:#E8F4F8;"></div>
<div class="a" style="left:794px;top:545px;width:1px;height:1px;background:#E8F4F8;"></div>
<div class="t" style="left:25.12px;top:6.00px;transform:scaleX(0.8802);color:#fff;">Intermodal Configuration @ TM183C [TMWIN - My Trucking Co Canada]</div>
<div class="t" style="left:7.50px;top:27.00px;transform:scaleX(0.8272);color:#000;">File</div>
<div class="t" style="left:34.00px;top:27.00px;transform:scaleX(0.9281);color:#000;">Multi-Company</div>
<div class="t" style="left:117.80px;top:27.00px;transform:scaleX(0.8713);color:#000;">Navigate</div>
<div class="t" style="left:169.40px;top:27.00px;transform:scaleX(0.8710);color:#000;">Tools</div>
<div class="t" style="left:204.50px;top:27.00px;transform:scaleX(0.9073);color:#000;">Help</div>
<div class="t" style="left:7.40px;top:69.00px;transform:scaleX(0.7736);color:#000;">Size</div>
<div class="t" style="left:48.40px;top:69.00px;transform:scaleX(0.8769);color:#000;">Container Per-Diem</div>
<div class="t" style="left:235.50px;top:69.00px;transform:scaleX(0.8523);color:#000;">Customers</div>
<div class="t" style="left:293.20px;top:69.00px;transform:scaleX(0.8400);color:#000;">Delivery</div>
<div class="t" style="left:339.00px;top:69.00px;transform:scaleX(0.8274);color:#000;">Service</div>
<div class="t" style="left:380.40px;top:69.00px;transform:scaleX(0.7681);color:#000;">Vessel</div>
<div class="t" style="left:420.57px;top:69.00px;transform:scaleX(0.8289);color:#000;">ISO Code</div>
<div class="t" style="left:472.90px;top:69.00px;transform:scaleX(0.8189);color:#000;">Trace</div>
<div class="t" style="left:513.60px;top:69.00px;transform:scaleX(0.8203);color:#000;">Check List</div>
<div class="t" style="left:569.00px;top:69.00px;transform:scaleX(0.8557);color:#000;">Rail Billing</div>
<div class="t" style="left:625.70px;top:69.00px;transform:scaleX(0.8406);color:#000;">Region</div>
<div class="t" style="left:147.90px;top:66.50px;transform:scaleX(0.8308);color:#000;">Chassis Per-Diem</div>
<div class="t" style="left:11.50px;top:86.00px;transform:scaleX(0.8119);color:#000;">Chassis Charges</div>
<div class="t" style="left:11.12px;top:105.00px;transform:scaleX(0.8828);color:#000;">ID</div>
<div class="t" style="left:70.00px;top:104.50px;transform:scaleX(0.7500);color:#000;">1</div>
<div class="t" style="left:104.80px;top:106.00px;transform:scaleX(0.8385);color:#000;">Sequence</div>
<div class="t" style="left:187.00px;top:104.50px;transform:scaleX(0.7667);color:#000;">1</div>
<div class="t" style="left:232.60px;top:105.50px;transform:scaleX(0.8928);color:#000;">Approved</div>
<div class="t" style="left:337.40px;top:105.50px;transform:scaleX(0.8464);color:#000;">Filter on Chassis Owner</div>
<div class="t" style="left:613.00px;top:105.50px;transform:scaleX(0.8553);color:#000;">Filter on Steamship</div>
<div class="t" style="left:23.80px;top:125.00px;transform:scaleX(0.8737);color:#000;">Criteria for rate to apply</div>
<div class="t" style="left:27.00px;top:141.50px;transform:scaleX(0.8658);color:#000;">Effective From</div>
<div class="t" style="left:96.80px;top:141.00px;transform:scaleX(0.8677);color:#000;">1/1/2018</div>
<div class="t" style="left:40.10px;top:162.50px;transform:scaleX(0.8566);color:#000;">Effective To</div>
<div class="t" style="left:96.80px;top:162.00px;transform:scaleX(0.8502);color:#000;">12/31/2018</div>
<div class="t" style="left:26.30px;top:183.50px;transform:scaleX(0.8216);color:#000;">Chassis Owner</div>
<div class="t" style="left:96.80px;top:183.00px;transform:scaleX(0.8490);color:#000;">ACMEVAN</div>
<div class="t" style="left:23.40px;top:203.50px;transform:scaleX(0.8507);color:#000;">Steamship Line</div>
<div class="t" style="left:65.90px;top:224.50px;transform:scaleX(0.8144);color:#000;">Caller</div>
<div class="t" style="left:57.30px;top:246.50px;transform:scaleX(0.8340);color:#000;">Shipper</div>
<div class="t" style="left:43.90px;top:267.50px;transform:scaleX(0.8537);color:#000;">Consignee</div>
<div class="t" style="left:50.80px;top:288.50px;transform:scaleX(0.8465);color:#000;">Currency</div>
<div class="t" style="left:96.80px;top:288.00px;transform:scaleX(0.8258);color:#000;">CAD</div>
<div class="t" style="left:26.30px;top:306.00px;transform:scaleX(0.8825);color:#000;">Apply to Region</div>
<div class="t" style="left:26.00px;top:324.00px;transform:scaleX(0.8263);color:#000;">Chassis Pool</div>
<div class="t" style="left:115.80px;top:323.00px;transform:scaleX(0.7591);color:#000;">WEST</div>
<div class="t" style="left:26.30px;top:348.00px;transform:scaleX(0.8741);color:#000;">Applies to Movement Types</div>
<div class="t" style="left:41.09px;top:364.00px;transform:scaleX(0.9105);color:#000;">Import / Dom IB</div>
<div class="t" style="left:135.00px;top:364.00px;transform:scaleX(0.8587);color:#000;">Empty Repo</div>
<div class="t" style="left:42.00px;top:381.00px;transform:scaleX(0.8597);color:#000;">Export / Dom OB</div>
<div class="t" style="left:135.00px;top:381.00px;transform:scaleX(0.8814);color:#000;">Other</div>
<div class="t" style="left:180.09px;top:381.00px;transform:scaleX(0.9103);color:#000;">IMC</div>
<div class="t" style="left:226.00px;top:125.00px;transform:scaleX(0.8407);color:#000;">Billing and Fees</div>
<div class="t" style="left:225.20px;top:141.00px;transform:scaleX(0.8639);color:#000;">Admin Fee</div>
<div class="t" style="left:344.50px;top:140.50px;transform:scaleX(0.7907);color:#000;">$51.00</div>
<div class="t" style="left:229.30px;top:158.00px;transform:scaleX(0.8406);color:#000;">Charges To</div>
<div class="t" style="left:243.00px;top:173.00px;transform:scaleX(0.8669);color:#000;">New Individual Bills</div>
<div class="t" style="left:243.00px;top:190.00px;transform:scaleX(0.8612);color:#000;">New Consolidated Bills</div>
<div class="t" style="left:243.00px;top:206.60px;transform:scaleX(0.8555);color:#000;">Acc Charge on Original FB</div>
<div class="t" style="left:226.00px;top:232.00px;transform:scaleX(0.8793);color:#000;">New Bill Options</div>
<div class="t" style="left:223.20px;top:250.50px;transform:scaleX(0.8725);color:#A0A0A0;">Billing Cycle</div>
<div class="t" style="left:225.20px;top:273.50px;transform:scaleX(0.8775);color:#A0A0A0;">Bill Number</div>
<div class="t" style="left:251.40px;top:295.50px;transform:scaleX(0.8619);color:#A0A0A0;">Bill To</div>
<div class="t" style="left:226.00px;top:318.50px;transform:scaleX(0.8359);color:#A0A0A0;">Charges On</div>
<div class="t" style="left:226.00px;top:344.00px;transform:scaleX(0.8443);color:#000;">Accessorial Charge codes</div>
<div class="t" style="left:236.70px;top:362.00px;transform:scaleX(0.8603);color:#000;">Admin Fee Code</div>
<div class="t" style="left:316.10px;top:361.50px;transform:scaleX(0.8590);color:#000;">CHASADM</div>
<div class="t" style="left:222.40px;top:385.00px;transform:scaleX(0.8714);color:#000;">Flat/Per-Diem Code</div>
<div class="t" style="left:316.10px;top:384.50px;transform:scaleX(0.7863);color:#000;">CHASBILL</div>
<div class="t" style="left:437.00px;top:125.00px;transform:scaleX(0.8755);color:#000;">Timing Setup</div>
<div class="t" style="left:448.20px;top:145.50px;transform:scaleX(0.8310);color:#000;">Clock Start</div>
<div class="t" style="left:502.00px;top:145.50px;transform:scaleX(0.8575);color:#000;">FB Dispatch from Rail Yard</div>
<div class="t" style="left:446.00px;top:168.50px;transform:scaleX(0.8411);color:#000;">Count Start</div>
<div class="t" style="left:501.11px;top:168.50px;transform:scaleX(0.8931);color:#000;">Interchange</div>
<div class="t" style="left:451.60px;top:191.50px;transform:scaleX(0.8459);color:#000;">Clock End</div>
<div class="t" style="left:502.00px;top:191.50px;transform:scaleX(0.8930);color:#000;">Empty Notify Date</div>
<div class="t" style="left:690.90px;top:147.00px;transform:scaleX(0.8853);color:#000;">Calc Method</div>
<div class="t" style="left:704.20px;top:163.60px;transform:scaleX(0.8255);color:#000;">Calendar Days</div>
<div class="t" style="left:704.20px;top:181.80px;transform:scaleX(0.8232);color:#000;">24 HR Period</div>
<div class="t" style="left:435.34px;top:219.00px;transform:scaleX(0.8645);color:#000;">Initial Usage Period</div>
<div class="t" style="left:434.80px;top:259.50px;transform:scaleX(0.8438);color:#000;"># of Days</div>
<div class="t" style="left:516.00px;top:259.00px;transform:scaleX(0.5833);color:#000;">1</div>
<div class="t" style="left:531.90px;top:260.00px;transform:scaleX(0.7993);color:#000;">Rate</div>
<div class="t" style="left:565.70px;top:259.00px;transform:scaleX(0.8632);color:#000;">$0.00</div>
<div class="t" style="left:602.00px;top:260.00px;transform:scaleX(0.7769);color:#000;">Free Days</div>
<div class="t" style="left:693.50px;top:230.00px;transform:scaleX(0.8942);color:#000;">Don't Count</div>
<div class="t" style="left:710.40px;top:245.00px;transform:scaleX(0.8233);color:#000;">Saturday</div>
<div class="t" style="left:710.40px;top:259.00px;transform:scaleX(0.8178);color:#000;">Sunday</div>
<div class="t" style="left:710.40px;top:273.00px;transform:scaleX(0.8590);color:#000;">Holidays</div>
<div class="t" style="left:436.20px;top:306.00px;transform:scaleX(0.8774);color:#000;">Per-Diem</div>
<div class="t" style="left:433.80px;top:324.50px;transform:scaleX(0.8106);color:#000;">1. Charge $</div>
<div class="t" style="left:507.60px;top:323.75px;transform:scaleX(0.8022);color:#000;">$20.00</div>
<div class="t" style="left:433.80px;top:347.50px;transform:scaleX(0.8106);color:#000;">2. Charge $</div>
<div class="t" style="left:507.60px;top:346.75px;transform:scaleX(0.8022);color:#000;">$25.00</div>
<div class="t" style="left:433.80px;top:370.50px;transform:scaleX(0.8106);color:#000;">3. Charge $</div>
<div class="t" style="left:507.60px;top:369.75px;transform:scaleX(0.8022);color:#000;">$30.00</div>
<div class="t" style="left:541.00px;top:326.00px;transform:scaleX(0.8810);color:#000;">/days for the first</div>
<div class="t" style="left:643.00px;top:323.75px;transform:scaleX(0.8667);color:#000;">2</div>
<div class="t" style="left:654.60px;top:326.00px;transform:scaleX(0.8134);color:#000;">days.</div>
<div class="t" style="left:541.00px;top:349.00px;transform:scaleX(0.8728);color:#000;">/days for the next</div>
<div class="t" style="left:645.00px;top:346.75px;transform:scaleX(0.8667);color:#000;">2</div>
<div class="t" style="left:655.70px;top:349.00px;transform:scaleX(0.8171);color:#000;">days.</div>
<div class="t" style="left:542.00px;top:373.50px;transform:scaleX(0.8869);color:#000;">/day until Clock End.</div>
<div class="t" style="left:693.50px;top:321.00px;transform:scaleX(0.8942);color:#000;">Don't Count</div>
<div class="t" style="left:710.40px;top:336.00px;transform:scaleX(0.8233);color:#000;">Saturday</div>
<div class="t" style="left:710.40px;top:350.00px;transform:scaleX(0.8178);color:#000;">Sunday</div>
<div class="t" style="left:710.40px;top:364.00px;transform:scaleX(0.8590);color:#000;">Holidays</div>
<div class="t" style="left:11.00px;top:415.00px;transform:scaleX(0.8209);color:#000;">Special Rate</div>
<div class="t" style="left:19.60px;top:432.50px;transform:scaleX(0.8363);color:#000;">Chassis Type</div>
<div class="t" style="left:122.80px;top:432.50px;transform:scaleX(0.7810);color:#000;">Chassis Size</div>
<div class="t" style="left:209.60px;top:432.50px;transform:scaleX(0.8062);color:#000;">Calc Seq</div>
<div class="t" style="left:261.20px;top:432.50px;transform:scaleX(0.8489);color:#000;">Region</div>
<div class="t" style="left:316.33px;top:432.50px;transform:scaleX(0.8690);color:#000;">Initial Rate</div>
<div class="t" style="left:377.80px;top:432.50px;transform:scaleX(0.7826);color:#000;">Days</div>
<div class="t" style="left:413.80px;top:432.50px;transform:scaleX(0.8386);color:#000;">Per diem rate 1</div>
<div class="t" style="left:484.90px;top:432.50px;transform:scaleX(0.8015);color:#000;">Days</div>
<div class="t" style="left:521.30px;top:432.50px;transform:scaleX(0.8463);color:#000;">Per diem rate 2</div>
<div class="t" style="left:593.00px;top:432.50px;transform:scaleX(0.7826);color:#000;">Days</div>
<div class="t" style="left:628.60px;top:432.50px;transform:scaleX(0.8386);color:#000;">Per diem rate 3</div>
<div class="t" style="left:700.00px;top:432.50px;transform:scaleX(0.7767);color:#000;">User 1</div>
<div class="t" style="left:752.90px;top:432.50px;transform:scaleX(0.7797);color:#000;">User 2</div>
<div class="t" style="left:20.00px;top:449.50px;transform:scaleX(0.8400);color:#000;">53REFFER</div>
<div class="t" style="left:250.46px;top:449.50px;transform:scaleX(0.8400);color:#000;">1</div>
<div class="t" style="left:342.29px;top:449.50px;transform:scaleX(0.8400);color:#000;">$25.00</div>
<div class="t" style="left:402.46px;top:449.50px;transform:scaleX(0.8400);color:#000;">1</div>
<div class="t" style="left:450.29px;top:449.50px;transform:scaleX(0.8400);color:#000;">$31.00</div>
<div class="t" style="left:509.46px;top:449.50px;transform:scaleX(0.8400);color:#000;">1</div>
<div class="t" style="left:557.29px;top:449.50px;transform:scaleX(0.8400);color:#000;">$34.00</div>
<div class="t" style="left:617.46px;top:449.50px;transform:scaleX(0.8400);color:#000;">1</div>
<div class="t" style="left:665.29px;top:449.50px;transform:scaleX(0.8400);color:#000;">$36.00</div>
<div class="t" style="left:20.00px;top:467.00px;transform:scaleX(0.8400);color:#000;">20TSLIDE</div>
<div class="t" style="left:123.00px;top:467.00px;transform:scaleX(0.8400);color:#000;">20</div>
<div class="t" style="left:250.46px;top:467.00px;transform:scaleX(0.8400);color:#000;">2</div>
<div class="t" style="left:347.00px;top:467.20px;transform:scaleX(0.8359);color:#000;font-size:13px;">$0.00</div>
<div class="t" style="left:402.46px;top:467.00px;transform:scaleX(0.8400);color:#000;">1</div>
<div class="t" style="left:450.29px;top:467.00px;transform:scaleX(0.8400);color:#000;">$21.00</div>
<div class="t" style="left:509.46px;top:467.00px;transform:scaleX(0.8400);color:#000;">2</div>
<div class="t" style="left:557.29px;top:467.00px;transform:scaleX(0.8400);color:#000;">$26.00</div>
<div class="t" style="left:617.46px;top:467.00px;transform:scaleX(0.8400);color:#000;">2</div>
<div class="t" style="left:665.29px;top:467.00px;transform:scaleX(0.8400);color:#000;">$31.00</div>
<div class="t" style="left:469.40px;top:539.00px;transform:scaleX(0.8312);color:#fff;">TM183C</div>
<div class="t" style="left:528.00px;top:539.00px;transform:scaleX(0.8633);color:#fff;">My Trucking Co Canada</div>
<div class="t" style="left:658.80px;top:539.00px;transform:scaleX(0.8158);color:#fff;">DAVIDH</div>
<div class="t" style="left:716.30px;top:539.00px;transform:scaleX(0.9313);color:#fff;">cap</div>
<div class="t" style="left:751.00px;top:539.00px;transform:scaleX(0.9059);color:#fff;">NUM</div></body></html>
